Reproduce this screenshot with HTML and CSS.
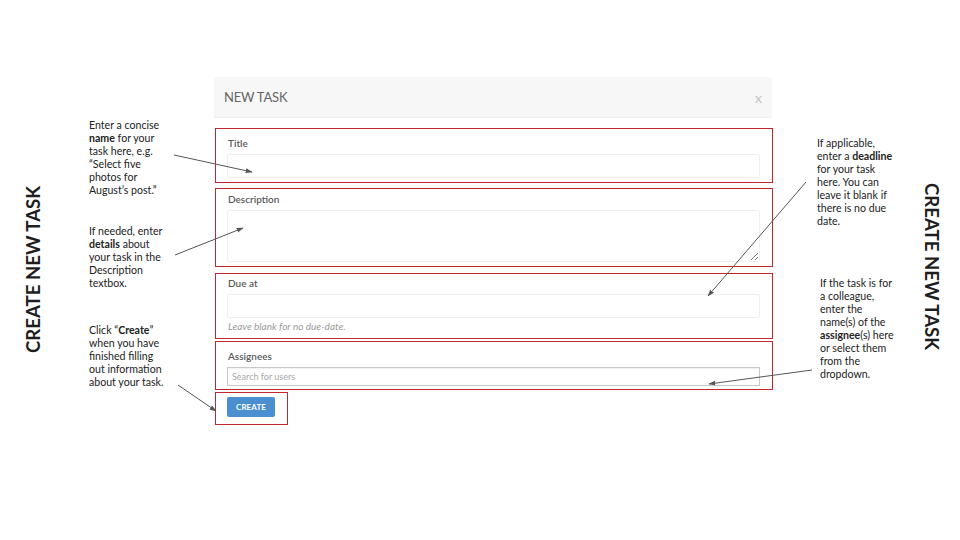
FILE: index.html
```html
<!DOCTYPE html>
<html lang="en">
<head>
<meta charset="utf-8">
<title>Create New Task</title>
<link rel="stylesheet" href="styles.css">
</head>
<body>
<div class="slide">
  <div class="side side-left"><span class="side-text side-text-up">CREATE NEW TASK</span></div>

  <div class="notes notes-left">
    <p class="note note-l1">Enter a concise<br><b>name</b> for your<br>task here, e.g.<br>“Select five<br>photos for<br>August’s post.”</p>
    <p class="note note-l2">If needed, enter<br><b>details</b> about<br>your task in the<br>Description<br>textbox.</p>
    <p class="note note-l3">Click “<b>Create</b>”<br>when you have<br>finished filling<br>out information<br>about your task.</p>
  </div>

  <div class="modal">
    <div class="modal-header">
      <span class="modal-title">NEW TASK</span>
      <span class="modal-close">x</span>
    </div>
    <div class="group group-title">
      <label class="label">Title</label>
      <div class="input"></div>
    </div>
    <div class="group group-desc">
      <label class="label">Description</label>
      <textarea class="textarea"></textarea>
    </div>
    <div class="group group-due">
      <label class="label">Due at</label>
      <div class="input"></div>
      <p class="help">Leave blank for no due-date.</p>
    </div>
    <div class="group group-assign">
      <label class="label">Assignees</label>
      <div class="search">Search for users</div>
    </div>
    <div class="group group-create">
      <span class="btn">CREATE</span>
    </div>
  </div>

  <div class="notes notes-right">
    <p class="note note-r1">If applicable,<br>enter a <b>deadline</b><br>for your task<br>here. You can<br>leave it blank if<br>there is no due<br>date.</p>
    <p class="note note-r2">If the task is for<br>a colleague,<br>enter the<br>name(s) of the<br><b>assignee</b>(s) here<br>or select them<br>from the<br>dropdown.</p>
  </div>

  <div class="side side-right"><span class="side-text side-text-down">CREATE NEW TASK</span></div>

  <svg class="arrows" width="960" height="540" viewBox="0 0 960 540">
    <defs>
      <marker id="ah" viewBox="0 0 10 10" refX="9" refY="5" markerWidth="7" markerHeight="7" orient="auto">
        <path d="M0 1.5 L10 5 L0 8.5 Z" fill="#555"/>
      </marker>
    </defs>
    <g stroke="#555" stroke-width="1" fill="none">
      <line x1="174" y1="155" x2="252" y2="172" marker-end="url(#ah)"/>
      <line x1="175" y1="255" x2="243" y2="228" marker-end="url(#ah)"/>
      <line x1="178" y1="385" x2="216" y2="411" marker-end="url(#ah)"/>
      <line x1="806" y1="182" x2="708" y2="296" marker-end="url(#ah)"/>
      <line x1="812" y1="370" x2="709" y2="384" marker-end="url(#ah)"/>
    </g>
  </svg>
</div>
</body>
</html>
```

FILE: styles.css
```css
* { box-sizing: border-box; }
html, body { margin: 0; padding: 0; background: #fff; }
body { font-family: Lato, "Open Sans", sans-serif; color: #222; }

.slide {
  position: relative;
  width: 960px;
  height: 540px;
  display: flex;
  overflow: hidden;
}

.side {
  display: flex;
  align-items: center;
  justify-content: center;
  height: 540px;
}
.side-left { width: 65px; }
.side-right { width: 56px; padding-bottom: 6px; }
.side-text {
  font-size: 18.6px;
  font-weight: 700;
  color: #1e1e1e;
  writing-mode: vertical-rl;
  white-space: nowrap;
}
.side-text-up { transform: rotate(180deg); }

.notes { display: flex; flex-direction: column; }
.notes-left { width: 150px; padding-left: 24px; }
.notes-right { width: 131px; padding-left: 44px; }

.note {
  margin: 0;
  font-size: 10.6px;
  line-height: 13px;
  color: #222;
  white-space: nowrap;
}
.note b { font-weight: 700; }
.note-l1 { margin-top: 119px; }
.note-l2 { margin-top: 28px; }
.note-l3 { margin-top: 34px; }
.note-r1 { margin-top: 137px; }
.note-r2 { margin-top: 49px; margin-left: 3px; }

.modal { width: 558px; padding-top: 77px; }

.modal-header {
  height: 41px;
  background: #f7f7f7;
  border-bottom: 1px solid #efefef;
  display: flex;
  align-items: center;
  justify-content: space-between;
  padding: 0 10px 0 10px;
  margin-bottom: 10px;
  margin-left: -1px;
  margin-right: 1px;
}
.modal-title { font-size: 13px; color: #666; letter-spacing: -0.2px; }
.modal-close { font-size: 14px; color: #c4c4c4; margin-top: 0; }

.group {
  border: 1px solid #c1272d;
  padding: 0 12px 0 11px;
  display: flex;
  flex-direction: column;
}
.label {
  display: block;
  font-size: 10px;
  line-height: 14px;
  font-weight: 600;
  color: #5a5a5a;
  margin: 0 0 4px 1px;
}
.input {
  height: 24px;
  border: 1px solid #eeeeee;
  background: #fff;
  border-radius: 2px;
}
.textarea {
  display: block;
  width: 100%;
  height: 52px;
  border: 1px solid #eeeeee;
  border-radius: 2px;
  resize: vertical;
  margin: 0;
  padding: 0;
  font: inherit;
  outline: none;
  opacity: 0.9;
}
.help {
  margin: 1px 0 0 1px;
  font-size: 10px;
  line-height: 14px;
  font-style: italic;
  color: #9a9a9a;
}
.search {
  height: 19px;
  border: 1px solid #c8c8c8;
  box-shadow: inset 0 1px 1px rgba(0,0,0,0.06);
  font-size: 9px;
  line-height: 17px;
  color: #a8a8a8;
  padding-left: 4px;
}

.group-title { height: 55px; padding-top: 7px; margin-bottom: 5px; }
.group-desc { height: 79px; padding-top: 3px; margin-bottom: 6px; }
.group-due { height: 66px; padding-top: 2px; margin-bottom: 2px; }
.group-assign { height: 49px; padding-top: 7px; margin-bottom: 2px; }
.group-create {
  width: 73px;
  height: 33px;
  padding: 4px 0 0 11px;
}

.btn {
  display: inline-block;
  width: 48px;
  height: 20px;
  background: #4a8fd0;
  border-radius: 2px;
  color: #fff;
  font-size: 8px;
  font-weight: 700;
  line-height: 20px;
  text-align: center;
  letter-spacing: 0.1px;
}

.arrows {
  position: absolute;
  left: 0;
  top: 0;
  pointer-events: none;
}
```
